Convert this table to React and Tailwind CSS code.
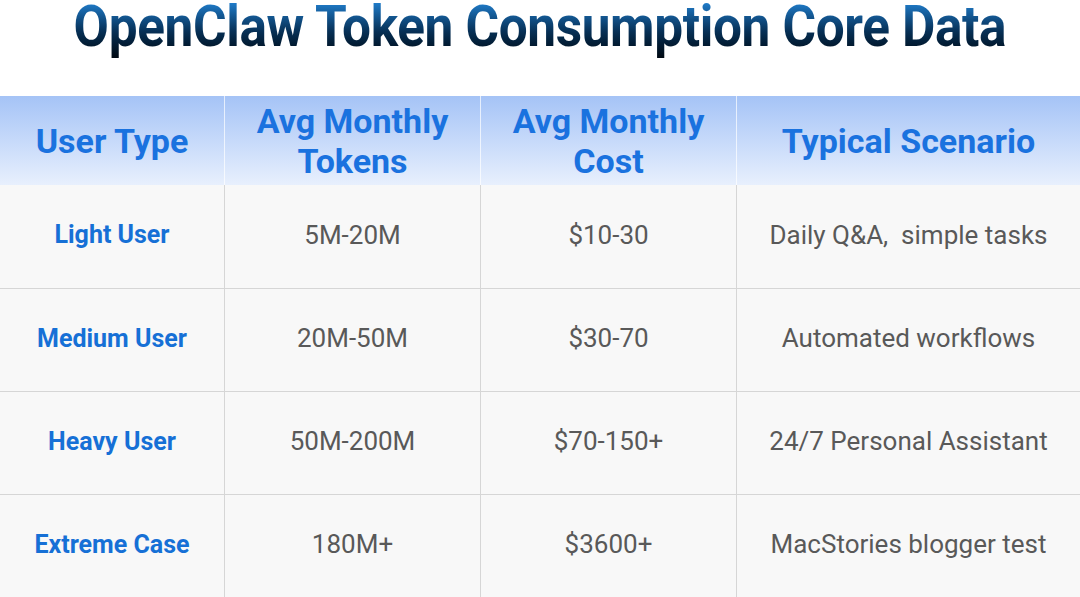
import React from 'react';

const rows = [
  { type: 'Light User', tokens: '5M-20M', cost: '$10-30', scenario: 'Daily Q&A,\u00a0 simple tasks' },
  { type: 'Medium User', tokens: '20M-50M', cost: '$30-70', scenario: 'Automated workflows' },
  { type: 'Heavy User', tokens: '50M-200M', cost: '$70-150+', scenario: '24/7 Personal Assistant' },
  { type: 'Extreme Case', tokens: '180M+', cost: '$3600+', scenario: 'MacStories blogger test' },
];

const cols = 'grid grid-cols-[224px_256px_256px_344px]';

const App = () => {
  return (
    <div className="w-[1080px] h-[597px] bg-white overflow-hidden font-['Roboto',sans-serif] flex flex-col">
      {/* Title */}
      <div className="h-[96px] flex justify-center items-start">
        <h1 className="pt-[2px] pb-[12px] text-[58px] font-bold leading-[49px] tracking-[-0.4px] scale-x-[0.885] whitespace-nowrap bg-gradient-to-b from-[#2284d6] via-[#073056] to-[#000408] bg-clip-text text-transparent">
          OpenClaw Token Consumption Core Data
        </h1>
      </div>

      {/* Header */}
      <div className={`${cols} h-[89px] bg-gradient-to-b from-[#a5c3f6] to-[#e8f0fd]`}>
        <div className="flex items-center justify-center text-[34px] font-bold text-[#1a72df] leading-[40px] text-center">User Type</div>
        <div className="border-l border-white/70 flex items-center justify-center text-[34px] font-bold text-[#1a72df] leading-[40px] text-center">Avg Monthly<br />Tokens</div>
        <div className="border-l border-white/70 flex items-center justify-center text-[34px] font-bold text-[#1a72df] leading-[40px] text-center">Avg Monthly<br />Cost</div>
        <div className="border-l border-white/70 flex items-center justify-center text-[34px] font-bold text-[#1a72df] leading-[40px] text-center">Typical Scenario</div>
      </div>

      {/* Body */}
      <div className="flex-1 flex flex-col bg-[#f8f8f8]">
        {rows.map((r, i) => (
          <div key={r.type} className={`${cols} h-[103px] ${i > 0 ? 'border-t border-[#d6d6d6]' : ''}`}>
            <div className="flex items-center justify-center pb-[3px] text-[25px] font-bold text-[#1670d6]">{r.type}</div>
            <div className="border-l border-[#d6d6d6] flex items-center justify-center pb-[3px] text-[26px] text-[#595959]">{r.tokens}</div>
            <div className="border-l border-[#d6d6d6] flex items-center justify-center pb-[3px] text-[26px] text-[#595959]">{r.cost}</div>
            <div className="border-l border-[#d6d6d6] flex items-center justify-center pb-[3px] text-[26px] text-[#595959] whitespace-pre">{r.scenario}</div>
          </div>
        ))}
      </div>
    </div>
  );
};

export default App;
